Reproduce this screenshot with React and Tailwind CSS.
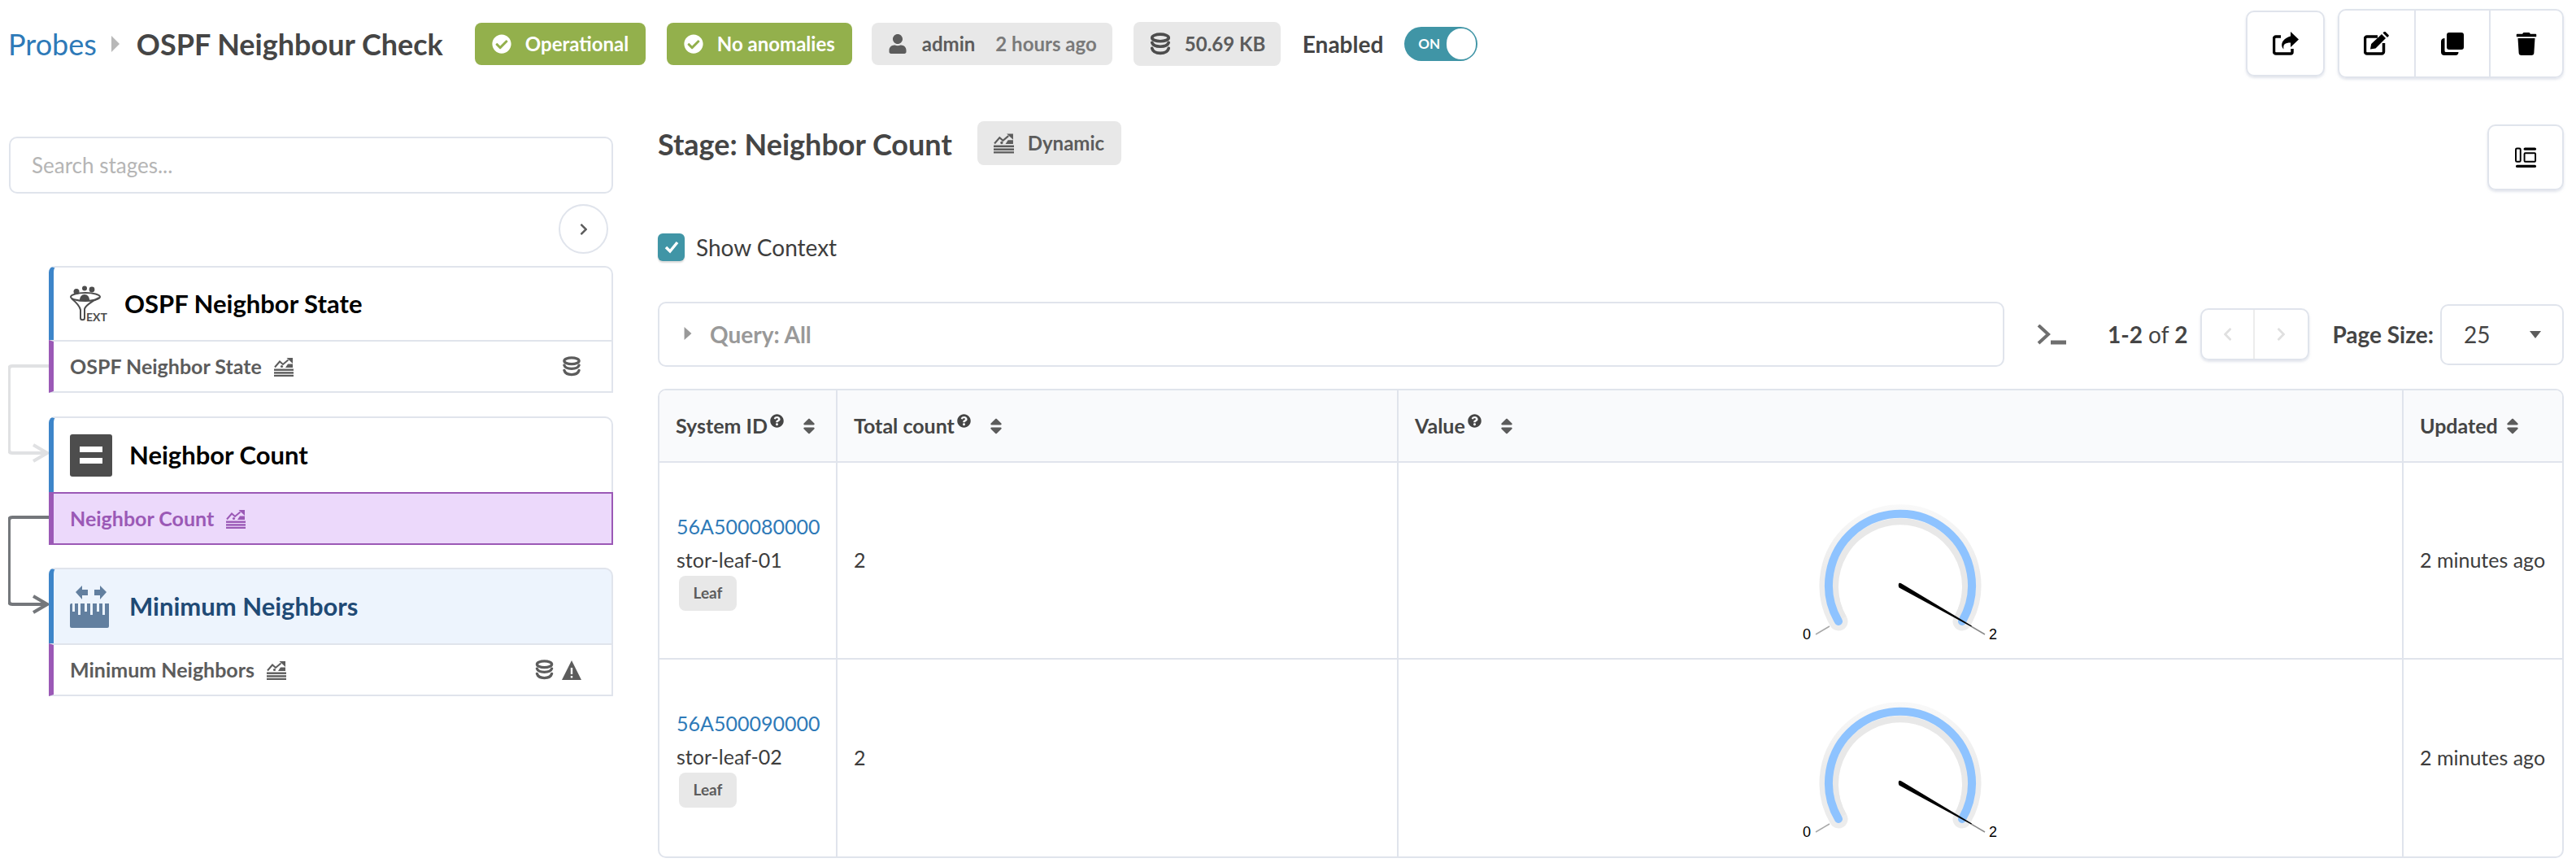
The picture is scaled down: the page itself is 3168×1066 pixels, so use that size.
import React from 'react';
import { FaCheckCircle, FaUser, FaTrash, FaSort, FaQuestionCircle, FaChevronRight, FaChevronLeft } from 'react-icons/fa';

const DbIcon = ({ className }) => (
  <svg viewBox="0 0 24 26" className={className} fill="none" stroke="currentColor" strokeLinecap="round">
    <ellipse cx="12" cy="6" rx="9.5" ry="4" strokeWidth="3.4" />
    <path d="M2.5 11.5c1 3 4.500 4.500 9.500 4.500s8.500-1.500 9.500-4.500" strokeWidth="3.4" />
    <path d="M2.500 18c1 3.500 4.500 5.500 9.500 5.500s8.500-2 9.500-5.500" strokeWidth="3.400" />
  </svg>
);

const DynamicIcon = ({ className }) => (
  <svg viewBox="0 0 24 24" className={className} fill="currentColor">
    <rect x="0" y="14.500" width="24" height="2.400" />
    <rect x="0" y="18.200" width="24" height="2.400" />
    <rect x="0" y="21.800" width="24" height="2.200" />
    <path d="M1 12.500 7 5.500l4 3.500 6.500-5.500" fill="none" stroke="currentColor" strokeWidth="2" />
    <path d="M15.500 1H23v7z" />
    <circle cx="9.500" cy="11.500" r="1.600" />
    <path d="M17 8.500l6 0v4.500h-9z" />
  </svg>
);

const ShareIcon = () => (
  <svg viewBox="0 0 32 29" className="w-[32px] h-[29px]">
    <path d="M10 6H4a2.500 2.500 0 0 0-2.500 2.500v16A2.500 2.500 0 0 0 4 27h18a2 2 0 0 0 2-2v-4" fill="none" stroke="black" strokeWidth="3.500" />
    <path d="M22 0l10 9.500-10 9.500v-5.500c-7 0-9.500 2-8.500 8-3.500-3-4.500-12 8.500-16z" fill="black" />
  </svg>
);

const EditIcon = () => (
  <svg viewBox="0 0 32 29" className="w-[32px] h-[29px]">
    <path d="M17 6H4a2.500 2.500 0 0 0-2.500 2.500v16A2.500 2.500 0 0 0 4 27h18a2.500 2.500 0 0 0 2.500-2.500V14" fill="none" stroke="black" strokeWidth="3.500" />
    <path d="M8 21.500l1.200-6.500L22 3l5 5L14.500 20.500z" fill="black" />
    <path d="M23.500 1.500 25 0c.5-.5 1-.5 1.500 0l4 4c.5.5.5 1 0 1.500L29 7z" fill="black" />
  </svg>
);

const CopyIcon = ({ className }) => (
  <svg viewBox="0 0 28 28" className={className} fill="currentColor">
    <rect x="7" y="0" width="21" height="21" rx="3" />
    <path d="M4.500 7v15.500a1.500 1.500 0 0 0 1.500 1.500h15.500c0 2.500-1.500 4-3.500 4H4c-2.500 0-4-1.500-4-4V11c0-2.500 2-4 4.500-4z" />
  </svg>
);

const LayoutIcon = () => (
  <svg viewBox="0 0 28 26" className="w-[27px] h-[26px]" fill="none" stroke="black">
    <rect x="1" y="1" width="6" height="17" rx="1.500" strokeWidth="2" />
    <rect x="11" y="0" width="16" height="3.500" rx="1.700" fill="black" stroke="none" />
    <rect x="12" y="7" width="14" height="11" rx="1" strokeWidth="2" />
    <rect x="1" y="22" width="26" height="3.500" rx="1.700" fill="black" stroke="none" />
  </svg>
);

const FunnelIcon = () => (
  <svg viewBox="0 0 46 45" className="w-[46px] h-[45px] shrink-0">
    <circle cx="8" cy="7.500" r="3.500" fill="#4d4d4d" />
    <circle cx="18" cy="3.500" r="3" fill="#4d4d4d" />
    <circle cx="27" cy="5" r="3.400" fill="#4d4d4d" />
    <path d="M12 18c0-4 2.500-7 6-7s6 3 6 7z" fill="#4d4d4d" />
    <ellipse cx="19" cy="14" rx="18" ry="5" fill="none" stroke="#4d4d4d" strokeWidth="2" />
    <path d="M2 16c6 5 10 9 11 14v10c0 3 5 3 5 0V29c1-4 8-9 18-14" fill="none" stroke="#4d4d4d" strokeWidth="2" />
    <text x="20" y="44" fontSize="14" fontWeight="700" fill="#4d4d4d" style={{ fontFamily: 'Lato, sans-serif' }}>EXT</text>
  </svg>
);

const EqualIcon = () => (
  <div className="w-[52px] h-[52px] bg-[#4d4d4d] rounded-[3px] flex flex-col items-center justify-center gap-[7px] shrink-0">
    <div className="w-[28px] h-[7px] bg-white" />
    <div className="w-[28px] h-[7px] bg-white" />
  </div>
);

const RulerIcon = () => (
  <svg viewBox="0 0 52 52" className="w-[52px] h-[52px] shrink-0" fill="#627f9f">
    <path d="M7 8 15 0v5h7v7h-7v5zM45 8l-8-8v5h-7v7h7v5z" />
    <path d="M2 22h1v10h3V22h4v14h3V22h5v10h3V22h4v14h3V22h5v10h3V22h4v14h3V22h5v-0 28a2 2 0 0 1-2 2H2a2 2 0 0 1-2-2V24a2 2 0 0 1 2-2z" />
  </svg>
);

const Badge = ({ color = 'gray', className = '', children }) => (
  <div className={`h-[52px] rounded-[8px] flex items-center text-[24px] font-bold ${color === 'green' ? 'bg-[#93b04c] text-white' : 'bg-[#e8e8e8] text-[#5c5c5c]'} ${className}`}>
    {children}
  </div>
);

const IconButton = ({ children, className = '' }) => (
  <div className={`flex items-center justify-center h-[81px] ${className}`}>{children}</div>
);

const Header = () => (
  <header className="h-[107px] flex items-center pl-[10px] pr-[15px]">
    <span className="text-[36px] text-[#2e7ab8]">Probes</span>
    <svg viewBox="0 0 10 20" className="w-[10px] h-[20px] ml-[18px] mr-[21px]"><path d="M0 0l10 10-10 10z" fill="#b8b8b8" /></svg>
    <h1 className="text-[36px] font-bold text-[#454545] w-[416px]">OSPF Neighbour Check</h1>
    <Badge color="green" className="w-[210px] pl-[21px] gap-[17px]"><FaCheckCircle className="w-[24px] h-[24px]" />Operational</Badge>
    <Badge color="green" className="w-[228px] pl-[21px] gap-[17px] ml-[26px]"><FaCheckCircle className="w-[24px] h-[24px]" />No anomalies</Badge>
    <Badge className="w-[296px] pl-[20px] ml-[24px]">
      <FaUser className="w-[24px] h-[24px] mr-[18px]" />admin
      <span className="text-[#7a7a7a] ml-[25px]">2 hours ago</span>
    </Badge>
    <Badge className="w-[181px] h-[54px] pl-[20px] gap-[17px] ml-[26px]"><DbIcon className="w-[26px] h-[28px] text-[#4d4d4d]" />50.69 KB</Badge>
    <span className="text-[28px] font-bold text-[#454545] ml-[27px]">Enabled</span>
    <div className="ml-[26px] w-[90px] h-[42px] rounded-full bg-[#4095a6] flex items-center justify-between pl-[17px] pr-[2px]">
      <span className="text-[17px] font-bold text-white">ON</span>
      <div className="w-[36px] h-[38px] rounded-full bg-white" />
    </div>
    <div className="ml-auto flex items-center gap-[16px]">
      <IconButton className="w-[97px] border-2 border-[#e0e4ec] rounded-[10px] shadow-[0_2px_3px_rgba(200,205,220,0.5)]"><ShareIcon /></IconButton>
      <div className="flex w-[278px] border-2 border-[#e0e4ec] rounded-[10px] shadow-[0_2px_3px_rgba(200,205,220,0.5)]">
        <IconButton className="h-[77px] w-[94px] border-r-2 border-[#e0e4ec]"><EditIcon /></IconButton>
        <IconButton className="h-[77px] w-[92px] border-r-2 border-[#e0e4ec]"><CopyIcon className="w-[28px] h-[28px] text-black" /></IconButton>
        <IconButton className="h-[77px] flex-1"><FaTrash className="w-[26px] h-[28px] text-black" /></IconButton>
      </div>
    </div>
  </header>
);

const Stage = ({ icon, title, sub, active, head, headHeight, right }) => (
  <div>
    <div className={`flex items-center gap-[21px] pl-[20px] border-l-[6px] border-l-[#3d85c9] border-t-2 border-r-2 border-[#e0e4ec] rounded-tl-[8px] rounded-tr-[10px] ${head ? 'bg-[#edf4fd]' : ''} ${headHeight}`}>
      {icon}
      <span className={`text-[31px] font-bold ${head ? 'text-[#1f4a75]' : 'text-black'}`}>{title}</span>
    </div>
    <div className={`h-[65px] flex items-center pl-[20px] pr-[37px] ${active ? 'border-2 border-l-[6px] border-[#9b59b6] bg-[#ecd9fb] text-[#9b59b6]' : 'border-l-[6px] border-l-[#9b59b6] border-t-2 border-r-2 border-b-2 border-t-[#e0e4ec] border-r-[#e0e4ec] border-b-[#e0e4ec] text-[#5c5c5c]'}`}>
      <span className="text-[25px] font-bold">{sub}</span>
      <DynamicIcon className="w-[24px] h-[24px] ml-[15px]" />
      {right && <div className="ml-auto flex items-center gap-[9px]">{right}</div>}
    </div>
  </div>
);

const Connectors = () => (
  <svg className="absolute left-[-50px] top-0 w-[50px] h-[530px]" viewBox="0 0 50 530" fill="none">
    <path d="M50 123H5q-4 0-4 4v99q0 4 4 4h43M31 220l17 10-17 10" stroke="#e0e1e3" strokeWidth="4" />
    <path d="M50 309H5q-4 0-4 4v99q0 4 4 4h43M31 406l17 10-17 10" stroke="#74777b" strokeWidth="4" />
  </svg>
);

const Sidebar = () => (
  <aside className="w-[743px] ml-[11px] pt-[61px] shrink-0">
    <div className="h-[70px] border-2 border-[#e0e4ec] rounded-[10px] flex items-center pl-[26px] text-[26px] text-[#b5b5b5]">Search stages...</div>
    <div className="flex justify-end mt-[13px] pr-[6px]">
      <div className="w-[61px] h-[61px] rounded-full border-2 border-[#e0e4ec] flex items-center justify-center">
        <FaChevronRight className="w-[14px] h-[16px] text-[#5c5c5c]" />
      </div>
    </div>
    <div className="relative mt-[15px] ml-[49px] flex flex-col">
      <Connectors />
      <Stage
        icon={<FunnelIcon />}
        title="OSPF Neighbor State"
        sub="OSPF Neighbor State"
        headHeight="h-[91px]"
        right={<DbIcon className="w-[24px] h-[25px]" />}
      />
      <div className="mt-[29px]">
        <Stage icon={<EqualIcon />} title="Neighbor Count" sub="Neighbor Count" headHeight="h-[93px]" active />
      </div>
      <div className="mt-[28px]">
        <Stage
          icon={<RulerIcon />}
          title="Minimum Neighbors"
          sub="Minimum Neighbors"
          headHeight="h-[93px]"
          head
          right={<>
            <DbIcon className="w-[25px] h-[25px]" />
            <svg viewBox="0 0 24 24" className="w-[24px] h-[24px]"><path fillRule="evenodd" d="M12 0l12 24H0zM10.800 9v8h2.400V9zm0 10v2.500h2.400V19z" fill="currentColor" /></svg>
          </>}
        />
      </div>
    </div>
  </aside>
);

const Gauge = ({ id }) => (
  <svg viewBox="-150 -151 300 240" className="w-[300px] h-[240px]">
    <defs>
      <linearGradient id={id} gradientUnits="userSpaceOnUse" x1="0" y1="-100" x2="0" y2="-20">
        <stop offset="0" stopColor="#f9f9f9" />
        <stop offset="1" stopColor="#ececec" />
      </linearGradient>
    </defs>
    <path d="M-76 44A88 88 0 1 1 76 44" fill="none" stroke={`url(#${id})`} strokeWidth="23" strokeLinecap="round" />
    <path d="M-70 40A80 80 0 1 1 70 40" fill="none" stroke="#e8e8e8" strokeWidth="8" />
    <path d="M-76 44A88 88 0 1 1 76 44" fill="none" stroke="#8ec3ff" strokeWidth="10" strokeLinecap="round" />
    <path d="M-104 60-87 50" stroke="#a8a8a8" strokeWidth="1.500" />
    <path d="M87 50 104 60" stroke="#8a8a8a" strokeWidth="1.500" />
    <path d="M-1.500 -3 Q-3 -1 -1.500 2.500L87 50.500 88 49.500 1.500 -2.500Q-.5 -3.500-1.500 -3Z" fill="black" />
    <text x="-115" y="66" fontSize="18" textAnchor="middle" fill="black" style={{ fontFamily: '"Liberation Sans", sans-serif' }}>0</text>
    <text x="114" y="66" fontSize="18" textAnchor="middle" fill="black" style={{ fontFamily: '"Liberation Sans", sans-serif' }}>2</text>
  </svg>
);

const HeadCell = ({ label, hint, last }) => (
  <div className={`h-[89px] flex items-center pl-[20px] bg-[#f9fafc] border-b-2 border-[#e0e4ec] text-[#454545] font-bold text-[25px] ${last ? '' : 'border-r-2'}`}>
    <span>{label}</span>
    {hint && <FaQuestionCircle className="w-[17px] h-[17px] mb-[12px] ml-[3px]" />}
    <FaSort className={`w-[18px] h-[24px] text-[#5c5c5c] ${hint ? 'ml-[22px]' : 'ml-[9px]'}`} />
  </div>
);

const Row = ({ id, name, last }) => {
  const border = last ? '' : 'border-b-2';
  return (
    <>
      <div className={`h-[242px] pl-[21px] pt-[60px] border-r-2 border-[#e0e4ec] text-[25px] ${border}`}>
        <div className="text-[#2e7ab8] leading-[36px]">{id}</div>
        <div className="text-[#3d3d3d] leading-[36px] mt-[5px]">{name}</div>
        <div className="ml-[3px] mt-[2px] w-[71px] h-[43px] rounded-[8px] bg-[#e8e8e8] text-[#5c5c5c] text-[19px] font-bold flex items-center justify-center">Leaf</div>
      </div>
      <div className={`h-[242px] pl-[20px] flex items-center border-r-2 border-[#e0e4ec] text-[25px] text-[#3d3d3d] ${border}`}>2</div>
      <div className={`h-[242px] flex items-center justify-center border-r-2 border-[#e0e4ec] ${border}`}><Gauge id={`g-${id}`} /></div>
      <div className={`h-[242px] pl-[20px] flex items-center border-[#e0e4ec] text-[25px] text-[#3d3d3d] ${border}`}>2 minutes ago</div>
    </>
  );
};

const Main = () => (
  <main className="ml-[55px] pr-[15px] flex-1 pt-[42px]">
    <div className="h-[138px] flex items-start">
      <h2 className="text-[36px] font-bold text-[#454545] mt-[1px]">Stage: Neighbor Count</h2>
      <div className="ml-[31px] w-[177px] h-[54px] rounded-[8px] bg-[#e8e8e8] text-[#5c5c5c] text-[24px] font-bold flex items-center pl-[20px] gap-[17px]">
        <DynamicIcon className="w-[25px] h-[26px]" />Dynamic
      </div>
      <IconButton className="ml-auto mt-[4px] w-[94px] border-2 border-[#e0e4ec] rounded-[10px] shadow-[0_2px_3px_rgba(200,205,220,0.5)]"><LayoutIcon /></IconButton>
    </div>
    <div className="h-[34px] flex items-center gap-[14px]">
      <div className="w-[33px] h-[34px] rounded-[6px] bg-[#4095a6] flex items-center justify-center shadow-[0_2px_2px_rgba(0,0,0,0.15)]">
        <svg viewBox="0 0 20 20" className="w-[20px] h-[20px]"><path d="M3 10l5 5 9-11" fill="none" stroke="white" strokeWidth="3.500" /></svg>
      </div>
      <span className="text-[28px] text-[#3d3d3d]">Show Context</span>
    </div>
    <div className="mt-[50px] h-[80px] flex items-center">
      <div className="w-[1656px] h-[80px] border-2 border-[#e0e4ec] rounded-[10px] flex items-center pl-[30px] text-[28px] font-bold text-[#999999]">
        <svg viewBox="0 0 10 18" className="w-[10px] h-[16px] mr-[22px] mb-[3px]"><path d="M0 0l10 9-10 9z" fill="#999999" /></svg>
        Query: All
      </div>
      <svg viewBox="0 0 37 25" className="ml-[40px] w-[37px] h-[25px]" fill="none" stroke="#6e6e6e" strokeWidth="4"><path d="M2 1l12 11-12 11" /><path d="M17 22h19" strokeWidth="5" /></svg>
      <span className="ml-[50px] text-[28px] text-[#454545]"><b>1-2</b> of <b>2</b></span>
      <div className="ml-[16px] w-[134px] h-[64px] flex border-2 border-[#e0e4ec] rounded-[10px] shadow-[0_2px_3px_rgba(200,205,220,0.5)]">
        <div className="w-[65px] border-r-2 border-[#ececec] flex items-center justify-center"><FaChevronLeft className="w-[13px] h-[18px] text-[#e0e0e0]" /></div>
        <div className="flex-1 flex items-center justify-center"><FaChevronRight className="w-[13px] h-[18px] text-[#e0e0e0]" /></div>
      </div>
      <span className="ml-[28px] text-[28px] font-bold text-[#454545]">Page Size:</span>
      <div className="ml-auto w-[152px] h-[75px] border-2 border-[#e0e4ec] rounded-[10px] flex items-center justify-between pl-[27px] pr-[26px] text-[28px] text-[#454545]">
        25
        <svg viewBox="0 0 14 9" className="w-[14px] h-[9px]"><path d="M0 0h14l-7 9z" fill="#5c5c5c" /></svg>
      </div>
    </div>
    <div className="mt-[27px] border-2 border-[#e0e4ec] rounded-[10px] overflow-hidden grid grid-cols-[219px_690px_1236px_1fr]">
      <HeadCell label="System ID" hint />
      <HeadCell label="Total count" hint />
      <HeadCell label="Value" hint />
      <HeadCell label="Updated" last />
      <Row id="56A500080000" name="stor-leaf-01" />
      <Row id="56A500090000" name="stor-leaf-02" last />
    </div>
  </main>
);

export default function App() {
  return (
    <div className="w-full h-[1066px] overflow-hidden bg-white font-['Lato',sans-serif]">
      <Header />
      <div className="flex">
        <Sidebar />
        <Main />
      </div>
    </div>
  );
}
